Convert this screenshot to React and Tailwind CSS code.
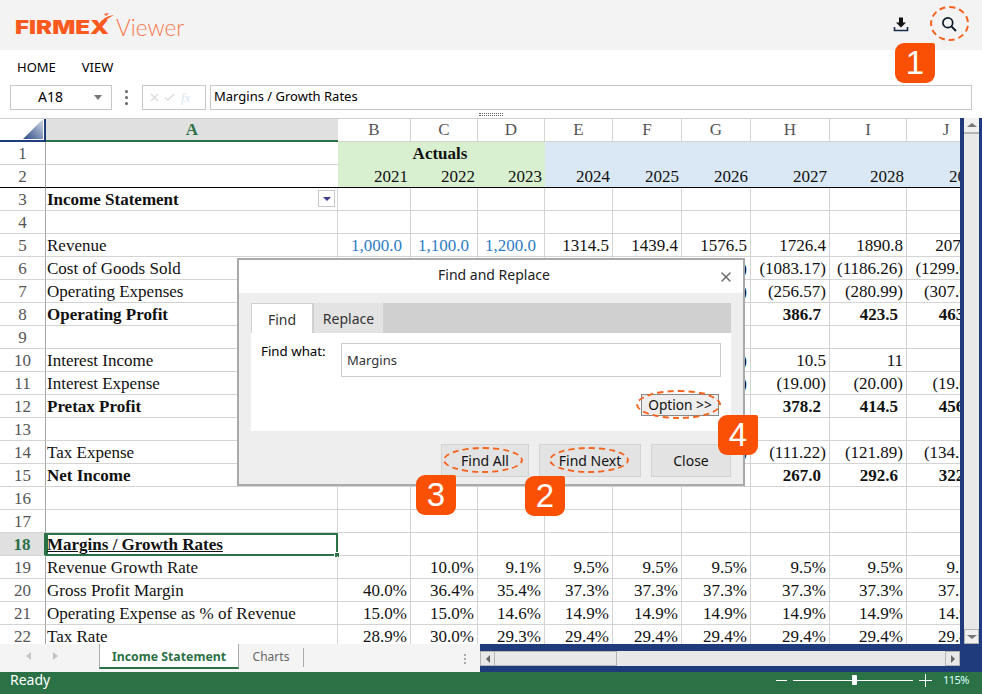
import { X, Check } from 'lucide-react'

const FONT_UI = "font-['Noto_Sans',sans-serif]"

// widths of the sheet columns, last one runs under the scrollbar
const SHEET_COLS = 'grid grid-cols-[46px_292px_73px_67px_67px_68px_69px_69px_79px_77px_79px] auto-rows-[23px]'

const LETTERS = ['B', 'C', 'D', 'E', 'F', 'G', 'H', 'I', 'J']
const YEARS = [2021, 2022, 2023, 2024, 2025, 2026, 2027, 2028, 2029]

const e = ''
const ROWS = [
  { n: 3, a: 'Income Statement', bold: true, filter: true },
  { n: 4 },
  { n: 5, a: 'Revenue', vals: ['1,000.0', '1,100.0', '1,200.0', '1314.5', '1439.4', '1576.5', '1726.4', '1890.8', '2070.4'], inputs: true },
  { n: 6, a: 'Cost of Goods Sold', vals: [e, e, e, e, e, ')', '(1083.17)', '(1186.26)', '(1299.00)'] },
  { n: 7, a: 'Operating Expenses', vals: [e, e, e, e, e, ')', '(256.57)', '(280.99)', '(307.68)'] },
  { n: 8, a: 'Operating Profit', bold: true, vals: [e, e, e, e, e, e, '386.7', '423.5', '463.7'] },
  { n: 9 },
  { n: 10, a: 'Interest Income', vals: [e, e, e, e, e, ')', '10.5', '11', e] },
  { n: 11, a: 'Interest Expense', vals: [e, e, e, e, e, ')', '(19.00)', '(20.00)', '(19.00)'] },
  { n: 12, a: 'Pretax Profit', bold: true, vals: [e, e, e, e, e, e, '378.2', '414.5', '456.2'] },
  { n: 13 },
  { n: 14, a: 'Tax Expense', vals: [e, e, e, e, e, ')', '(111.22)', '(121.89)', '(134.12)'] },
  { n: 15, a: 'Net Income', bold: true, vals: [e, e, e, e, e, e, '267.0', '292.6', '322.1'] },
  { n: 16 },
  { n: 17 },
  { n: 18, a: 'Margins / Growth Rates', bold: true, underline: true, selected: true },
  { n: 19, a: 'Revenue Growth Rate', vals: [e, '10.0%', '9.1%', '9.5%', '9.5%', '9.5%', '9.5%', '9.5%', '9.5%'] },
  { n: 20, a: 'Gross Profit Margin', vals: ['40.0%', '36.4%', '35.4%', '37.3%', '37.3%', '37.3%', '37.3%', '37.3%', '37.3%'] },
  { n: 21, a: 'Operating Expense as % of Revenue', vals: ['15.0%', '15.0%', '14.6%', '14.9%', '14.9%', '14.9%', '14.9%', '14.9%', '14.9%'] },
  { n: 22, a: 'Tax Rate', vals: ['28.9%', '30.0%', '29.3%', '29.4%', '29.4%', '29.4%', '29.4%', '29.4%', '29.4%'] },
]

function Badge({ pos, children }) {
  return (
    <div className={`absolute ${pos} w-10 h-10 bg-[#fa5005] rounded-[9px] rounded-tr-[2px] flex items-center justify-center text-white text-[33px] font-['Liberation_Sans',sans-serif]`}>
      {children}
    </div>
  )
}

function Ring({ pos }) {
  return <div className={`absolute ${pos} border-2 border-dashed border-[#f4641e] rounded-[50%]`}></div>
}

function TopBar() {
  return (
    <div className="h-[50px] bg-[#f3f3f3] flex items-center justify-between pl-[15px] pr-[25px] shrink-0">
      <div className="flex items-center pt-[5px]">
        <div className="relative w-[101px] h-[24px]">
          <span className="block origin-left scale-x-[1.27] text-[#fa5a1e] font-black text-[19px] leading-[24px] font-['Inter',sans-serif]">FIRMEX</span>
          <svg className="absolute left-[84px] top-[-3px]" width="16" height="12" viewBox="0 0 16 12">
            <path d="M1 10 C5 5 8 3 15 2 C10 5 6 7 2 11Z" fill="#fa5a1e" />
            <path d="M5 1 L10 0 L7 3Z" fill="#fa5a1e" />
          </svg>
        </div>
        <span className="text-[#f4794c] font-light text-[22.5px] leading-[24px] font-['Lato',sans-serif]">Viewer</span>
      </div>
      <div className="flex items-center gap-[33px]">
        <svg className="-mt-[2px]" width="16" height="16" viewBox="0 0 16 16" fill="none">
          <path d="M6 1.5h4v5h3L8 11.5 3 6.5h3z" fill="#111" />
          <path d="M1.5 11v3.5h13V11" stroke="#1a2a4a" strokeWidth="1.6" />
        </svg>
        <svg className="-mt-[1px]" width="15" height="15" viewBox="0 0 15 15" fill="none" stroke="#0d1b2a">
          <circle cx="5.8" cy="5.8" r="4.9" strokeWidth="1.7" />
          <path d="M9.4 9.4l4.6 4.6" strokeWidth="2" />
        </svg>
      </div>
    </div>
  )
}

function FormulaBar() {
  return (
    <div className={`bg-white shrink-0 ${FONT_UI}`}>
      <div className="h-[35px] flex items-center gap-[26px] pl-[17px] text-[13px] text-black">
        <span>HOME</span>
        <span>VIEW</span>
      </div>
      <div className="h-[25px] flex items-stretch pl-[10px] pr-[10px]">
        <div className="w-[102px] border border-[#c8c8c8] flex items-center justify-between pl-[27px] pr-[9px] pb-[2px] text-[14px]">
          <span>A18</span>
          <span className="w-0 h-0 mt-[2px] border-x-[4px] border-x-transparent border-t-[5px] border-t-[#777]"></span>
        </div>
        <div className="w-[30px] flex flex-col items-center justify-center gap-[3px] pr-[2px]">
          <span className="w-[3px] h-[3px] bg-[#666] rounded-full"></span>
          <span className="w-[3px] h-[3px] bg-[#666] rounded-full"></span>
          <span className="w-[3px] h-[3px] bg-[#666] rounded-full"></span>
        </div>
        <div className="w-[64px] border border-[#c8c8c8] flex items-center pl-[5px] gap-[2px] text-[#d8d8d8]">
          <X size={13} />
          <Check size={13} />
          <span className="ml-[3px] text-[13px] italic text-[#d9e6f2] font-['Liberation_Serif',serif]">fx</span>
        </div>
        <div className="ml-[4px] flex-1 border border-[#c8c8c8] flex items-center pl-[3px] pb-[2px] text-[13px] text-black">
          Margins / Growth Rates
        </div>
      </div>
      <div className="h-[8px] flex items-center justify-center">
        <span className="w-[24px] h-[3px] border-y border-dotted border-[#666]"></span>
      </div>
    </div>
  )
}

function Sheet() {
  const head = 'border-r border-b border-[#d4d4d4] text-center text-[#555] leading-[22px]'
  const rowNo = 'border-r border-b border-r-[#a6a6a6] border-b-[#d4d4d4] text-center text-[#555] leading-[23px]'
  const cell = 'border-r border-b border-[#d4d4d4] text-right leading-[23px] whitespace-nowrap'

  return (
    <div className="flex-1 min-w-0 overflow-hidden border-t border-[#cfcfcf]">
      <div className={`${SHEET_COLS} w-[986px] text-[17px] text-[#111] font-['Liberation_Serif',serif]`}>
        <div className="border-r-2 border-b-2 border-r-[#1f3b7c] border-b-[#1f3b7c] flex items-start justify-end pr-px">
          <svg width="20" height="20" viewBox="0 0 20 20">
            <defs>
              <linearGradient id="corner" x1="0" y1="1" x2="1" y2="0">
                <stop offset="0" stopColor="#2b4a86" />
                <stop offset="1" stopColor="#d5dce8" />
              </linearGradient>
            </defs>
            <polygon points="20,0 20,20 0,20" fill="url(#corner)" />
          </svg>
        </div>
        <div className="bg-[#e0e0e0] border-b-2 border-[#2b7146] text-center font-bold text-[#2b7146] leading-[22px]">A</div>
        {LETTERS.map((l) => (
          <div key={l} className={head}>{l}</div>
        ))}

        <div className={rowNo}>1</div>
        <div className="border-b border-[#d4d4d4]"></div>
        <div className="col-span-3 bg-[#d9f0d0] text-center font-bold leading-[23px] pr-[3px]">Actuals</div>
        <div className="col-span-6 bg-[#dae8f5]"></div>

        <div className="border-r border-r-[#a6a6a6] border-b border-b-black text-center text-[#555] leading-[23px]">2</div>
        <div className="border-b border-black"></div>
        {YEARS.map((y, i) => (
          <div key={y} className={`border-b border-black text-right pr-[3px] leading-[23px] ${i < 3 ? 'bg-[#d9f0d0]' : 'bg-[#dae8f5]'}`}>{y}</div>
        ))}

        {ROWS.map((r) => (
          <SheetRow key={r.n} row={r} rowNo={rowNo} cell={cell} />
        ))}
      </div>
    </div>
  )
}

function SheetRow({ row, rowNo, cell }) {
  const labelStyle = `${row.bold ? 'font-bold' : ''} ${row.underline ? 'underline' : ''}`
  return (
    <>
      {row.selected ? (
        <div className="bg-[#e0e0e0] border-r-2 border-r-[#2b7146] border-b border-b-[#d4d4d4] text-center font-bold text-[#2b7146] leading-[23px]">{row.n}</div>
      ) : (
        <div className={rowNo}>{row.n}</div>
      )}
      {row.selected ? (
        <div className={`relative border-2 border-[#2b7146] leading-[19px] whitespace-nowrap ${labelStyle}`}>
          <span className="block -ml-px">{row.a}</span>
          <span className="absolute right-[-4px] bottom-[-4px] w-[6px] h-[6px] bg-[#2b7146] border border-white"></span>
        </div>
      ) : (
        <div className={`relative border-r border-b border-[#d4d4d4] pl-px leading-[23px] whitespace-nowrap ${labelStyle}`}>
          {row.a}
          {row.filter && (
            <span className="absolute right-[2px] top-[2px] w-[17px] h-[17px] bg-white border border-[#c8c8c8] flex items-center justify-center">
              <span className="w-0 h-0 border-x-[4px] border-x-transparent border-t-[4px] border-t-[#3c3c8c]"></span>
            </span>
          )}
        </div>
      )}
      {LETTERS.map((l, i) => {
        const v = row.vals ? row.vals[i] : ''
        const blue = row.inputs && i < 3
        // inputs and bold totals sit further in from the cell edge
        const inset = blue || row.bold ? 'pr-[8px]' : 'pr-[3px]'
        return (
          <div key={l} className={`${cell} ${inset} ${row.bold ? 'font-bold' : ''} ${blue ? 'text-[#2e7cc4]' : ''}`}>{v}</div>
        )
      })}
    </>
  )
}

function VScroll() {
  return (
    <div className="w-[22px] shrink-0 border-l-[4px] border-r-[3px] border-[#1f3b7c] bg-[#e8e8e8] flex flex-col justify-between">
      <div className="h-[16px] bg-[#f0f0f0] border-b-2 border-[#b4b4b4] flex items-center justify-center">
        <span className="w-0 h-0 border-x-[5px] border-x-transparent border-b-[4px] border-b-[#777]"></span>
      </div>
      <div className="h-[15px] bg-[#f0f0f0] border border-[#b4b4b4] flex items-center justify-center">
        <span className="w-0 h-0 border-x-[5px] border-x-transparent border-t-[4px] border-t-[#777]"></span>
      </div>
    </div>
  )
}

function TabBar() {
  return (
    <div className="h-[28px] flex shrink-0">
      <div className={`w-[480px] bg-[#f4f4f4] flex items-start ${FONT_UI}`}>
        <div className="w-[99px] h-[24px] flex items-center gap-[22px] pl-[26px]">
          <span className="w-0 h-0 border-y-[4px] border-y-transparent border-r-[5px] border-r-[#c4c4c4]"></span>
          <span className="w-0 h-0 border-y-[4px] border-y-transparent border-l-[5px] border-l-[#c4c4c4]"></span>
        </div>
        <div className="w-[140px] h-[25px] bg-white border-l border-r border-[#aaa] border-b-2 border-b-[#2b7146] text-center font-bold text-[12.3px] leading-[25px] text-[#2b7146]">Income Statement</div>
        <div className="w-[65px] h-[19px] mt-[4px] border-r border-[#aaa] text-center text-[12px] leading-[18px] text-[#666]">Charts</div>
        <div className="flex-1 h-[24px] flex flex-col items-end justify-center gap-[2px] pr-[14px] pt-[6px]">
          <span className="w-[2px] h-[2px] bg-[#aaa]"></span>
          <span className="w-[2px] h-[2px] bg-[#aaa]"></span>
          <span className="w-[2px] h-[2px] bg-[#aaa]"></span>
        </div>
      </div>
      <div className="flex-1 bg-[#1f3b7c] pt-[7px] pr-[22px] pb-[6px]">
        <div className="h-[15px] bg-[#e8e8e8] flex">
          <div className="w-[15px] border border-[#b4b4b4] flex items-center justify-center">
            <span className="w-0 h-0 border-y-[4px] border-y-transparent border-r-[4px] border-r-[#666]"></span>
          </div>
          <div className="w-[122px] border border-[#b4b4b4] border-l-0"></div>
          <div className="flex-1"></div>
          <div className="w-[15px] border border-[#b4b4b4] flex items-center justify-center">
            <span className="w-0 h-0 border-y-[4px] border-y-transparent border-l-[4px] border-l-[#666]"></span>
          </div>
        </div>
      </div>
    </div>
  )
}

function StatusBar() {
  return (
    <div className={`h-[22px] bg-[#2b7146] flex items-center justify-between pl-[10px] pr-[13px] pb-[6px] shrink-0 text-white ${FONT_UI}`}>
      <span className="text-[14px] leading-[18px]">Ready</span>
      <div className="flex items-center">
        <span className="w-[11px] h-px bg-white"></span>
        <div className="relative ml-[6px] w-[120px] h-px bg-white">
          <span className="absolute left-[59px] top-[-5px] w-[5px] h-[10px] bg-white rounded-[1px]"></span>
        </div>
        <div className="relative ml-[6px] w-[13px] h-[13px] flex items-center">
          <span className="w-full h-px bg-white"></span>
          <span className="absolute left-[6px] top-0 w-px h-full bg-white"></span>
        </div>
        <span className="ml-[11px] text-[11px] tracking-[-0.5px] text-[#dff]">115%</span>
      </div>
    </div>
  )
}

function FindDialog() {
  const btn = 'h-[33px] bg-[#e3e3e3] border border-[#d2d2d2] text-[14px] text-[#111] flex items-center justify-center'
  return (
    <div className={`absolute left-[237px] top-[258px] w-[508px] h-[228px] border-2 border-[#a9a9a9] bg-[#eeeeee] ${FONT_UI}`}>
      <div className="h-[33px] bg-white flex items-center pl-[31px] pr-[9px]">
        <span className="flex-1 text-center text-[14px] text-[#222] pb-[4px]">Find and Replace</span>
        <X size={16} color="#666" />
      </div>
      <div className="px-[12px] pt-[10px]">
        <div className="h-[30px] bg-[#d0d0d0] flex text-[14px]">
          <div className="w-[61px] bg-white border-t border-l border-[#d0d0d0] text-center leading-[31px] text-[#333]">Find</div>
          <div className="ml-[2px] w-[69px] bg-[#e3e3e3] text-center leading-[32px] text-[#333]">Replace</div>
        </div>
        <div className="h-[98px] bg-white pt-[10px] pl-[10px] pr-[10px]">
          <div className="flex items-start">
            <span className="w-[80px] text-[13.3px] leading-[16px] text-black">Find what:</span>
            <div className="flex-1 h-[34px] border border-[#ccc] pl-[5px] text-[13px] leading-[32px] text-[#333]">Margins</div>
          </div>
          <div className="mt-[17px] flex justify-end pr-[2px]">
            <div className="w-[78px] h-[22px] bg-[#eeeeee] border border-[#888] text-center text-[13.7px] leading-[20px] text-[#111]">Option &gt;&gt;</div>
          </div>
        </div>
        <div className="mt-[13px] flex justify-end gap-[10px]">
          <div className={`${btn} w-[88px]`}>Find All</div>
          <div className={`${btn} w-[102px] text-[13.5px]`}>Find Next</div>
          <div className={`${btn} w-[80px] text-[13.5px]`}>Close</div>
        </div>
      </div>
    </div>
  )
}

export default function App() {
  return (
    <div className="relative w-[982px] h-[694px] overflow-hidden bg-white flex flex-col">
      <TopBar />
      <FormulaBar />
      <div className="flex-1 min-h-0 flex">
        <Sheet />
        <VScroll />
      </div>
      <TabBar />
      <StatusBar />

      <FindDialog />

      <Ring pos="left-[930px] top-[6px] w-[39px] h-[35px]" />
      <Ring pos="left-[443px] top-[447px] w-[80px] h-[26px]" />
      <Ring pos="left-[549px] top-[447px] w-[80px] h-[26px]" />
      <Ring pos="left-[636px] top-[390px] w-[85px] h-[29px]" />

      <Badge pos="left-[895px] top-[43px]">1</Badge>
      <Badge pos="left-[525px] top-[476px]">2</Badge>
      <Badge pos="left-[416px] top-[475px]">3</Badge>
      <Badge pos="left-[718px] top-[415px]">4</Badge>
    </div>
  )
}
